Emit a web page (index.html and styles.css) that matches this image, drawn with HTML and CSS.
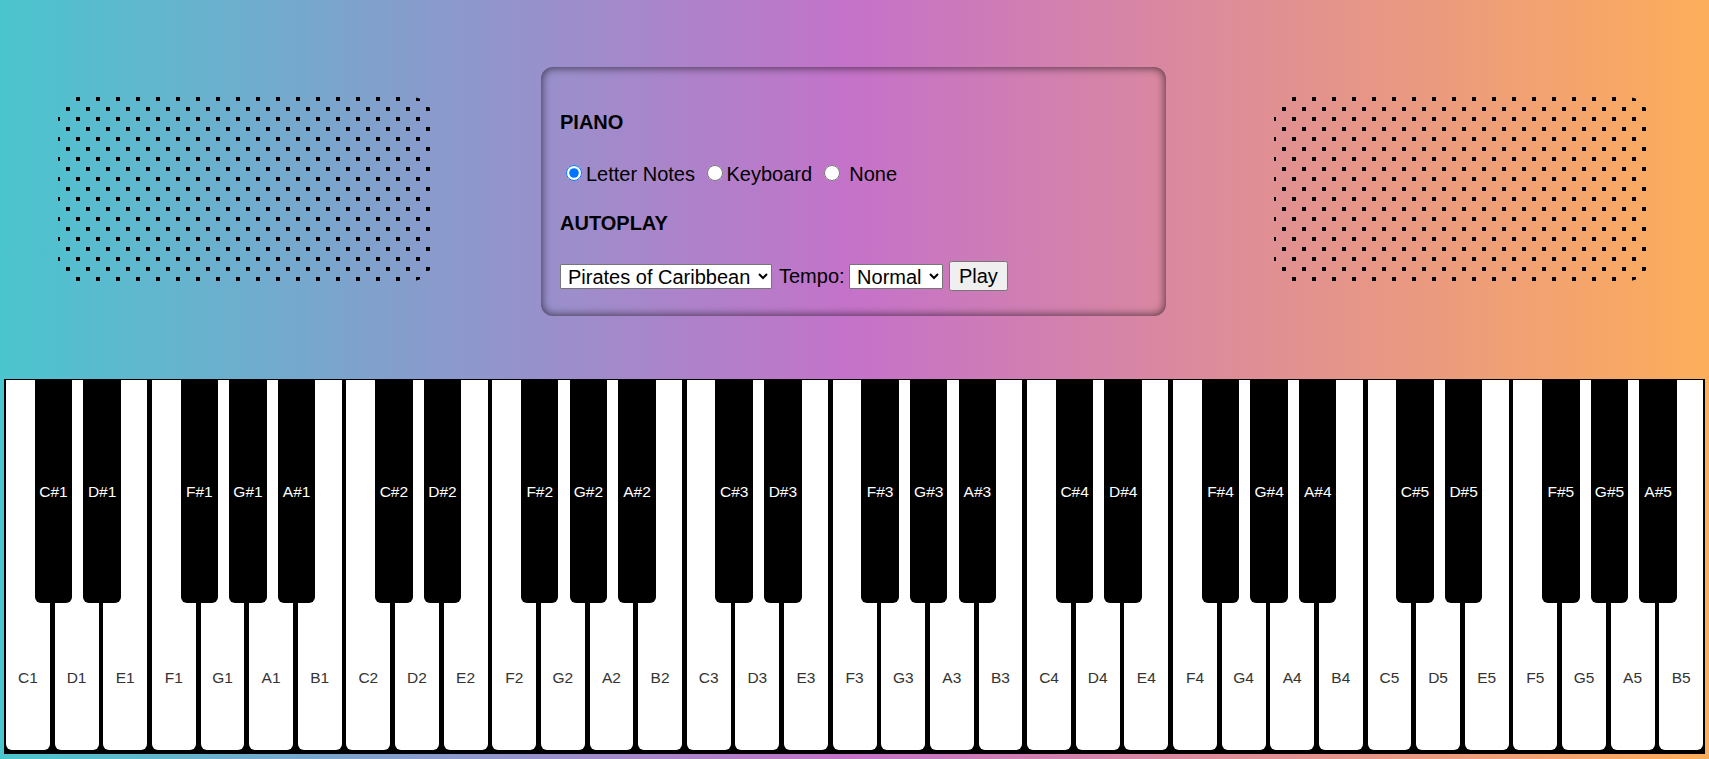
FILE: index.html
```html
<!DOCTYPE html>
<html lang="en">
<head>
<meta charset="utf-8">
<title>Piano</title>
<link rel="stylesheet" href="styles.css">
</head>
<body>
<div class="top">
  <div class="speaker"></div>
  <div class="panel">
    <h4 class="title">PIANO</h4>
    <div class="radios"><label><input type="radio" name="mode" checked>Letter Notes</label> <label><input type="radio" name="mode">Keyboard</label> <label><input type="radio" name="mode"> None</label></div>
    <h4 class="title title-auto">AUTOPLAY</h4>
    <div class="controls">
      <select class="song"><option>Pirates of Caribbean</option></select>
      <span class="tempo-label">Tempo:</span>
      <select class="tempo"><option>Normal</option></select>
      <button class="play">Play</button>
    </div>
  </div>
  <div class="speaker"></div>
</div>
<div class="piano">
  <div class="white"><span>C1</span><div class="black">C#1</div></div>
  <div class="white"><span>D1</span><div class="black">D#1</div></div>
  <div class="white"><span>E1</span></div>
  <div class="white"><span>F1</span><div class="black">F#1</div></div>
  <div class="white"><span>G1</span><div class="black">G#1</div></div>
  <div class="white"><span>A1</span><div class="black">A#1</div></div>
  <div class="white"><span>B1</span></div>
  <div class="white"><span>C2</span><div class="black">C#2</div></div>
  <div class="white"><span>D2</span><div class="black">D#2</div></div>
  <div class="white"><span>E2</span></div>
  <div class="white"><span>F2</span><div class="black">F#2</div></div>
  <div class="white"><span>G2</span><div class="black">G#2</div></div>
  <div class="white"><span>A2</span><div class="black">A#2</div></div>
  <div class="white"><span>B2</span></div>
  <div class="white"><span>C3</span><div class="black">C#3</div></div>
  <div class="white"><span>D3</span><div class="black">D#3</div></div>
  <div class="white"><span>E3</span></div>
  <div class="white"><span>F3</span><div class="black">F#3</div></div>
  <div class="white"><span>G3</span><div class="black">G#3</div></div>
  <div class="white"><span>A3</span><div class="black">A#3</div></div>
  <div class="white"><span>B3</span></div>
  <div class="white"><span>C4</span><div class="black">C#4</div></div>
  <div class="white"><span>D4</span><div class="black">D#4</div></div>
  <div class="white"><span>E4</span></div>
  <div class="white"><span>F4</span><div class="black">F#4</div></div>
  <div class="white"><span>G4</span><div class="black">G#4</div></div>
  <div class="white"><span>A4</span><div class="black">A#4</div></div>
  <div class="white"><span>B4</span></div>
  <div class="white"><span>C5</span><div class="black">C#5</div></div>
  <div class="white"><span>D5</span><div class="black">D#5</div></div>
  <div class="white"><span>E5</span></div>
  <div class="white"><span>F5</span><div class="black">F#5</div></div>
  <div class="white"><span>G5</span><div class="black">G#5</div></div>
  <div class="white"><span>A5</span><div class="black">A#5</div></div>
  <div class="white"><span>B5</span></div>
</div>
</body>
</html>
```
FILE: styles.css
```css
html {
  height: 100%;
  background: linear-gradient(90deg, #4bc5cf 0%, #c572c9 50%, #fdae5a 100%);
}

body {
  margin: 0;
  height: 759px;
  overflow: hidden;
  font-family: "Liberation Sans", Arial, sans-serif;
  color: #000;
}

.top {
  height: 379px;
  display: flex;
  align-items: flex-start;
  padding-left: 58px;
  gap: 108.5px;
  box-sizing: border-box;
}

.speaker {
  flex: 0 0 374px;
  height: 184px;
  margin-top: 97px;
  border-radius: 20px;
  background:
    conic-gradient(from 270deg at 4px 4px, #000 25%, transparent 0) 8px 10px / 20px 20px,
    conic-gradient(from 270deg at 4px 4px, #000 25%, transparent 0) 18px 0 / 20px 20px;
}

.panel {
  flex: 0 0 625px;
  height: 249px;
  margin-top: 67px;
  box-sizing: border-box;
  padding: 44px 19.5px 23.5px;
  border-radius: 12px;
  box-shadow: inset 0 0 9px 1px rgba(0, 0, 0, 0.6);
}

.title {
  margin: 0;
  font-size: 20px;
  font-weight: bold;
  line-height: 23px;
}

.radios {
  margin-top: 28px;
  font-size: 20px;
  line-height: 23px;
  height: 23px;
  padding-top: 1px;
}

.radios input {
  width: 16px;
  height: 16px;
  margin: 0 3.75px 0 6.25px;
  vertical-align: baseline;
}

.title-auto {
  margin-top: 26px;
}

.controls {
  margin-top: 26px;
  height: 30px;
  display: flex;
  align-items: center;
  font-size: 20px;
}

.song,
.tempo {
  height: 25px;
  font-family: "Liberation Sans", Arial, sans-serif;
  font-size: 20px;
  color: #000;
  background: #fff;
  border: 1px solid #767676;
  border-radius: 1px;
  padding: 0 0 0 3px;
  box-sizing: border-box;
}

.song {
  width: 212px;
  margin-right: 7px;
}

.tempo-label {
  margin-right: 4.5px;
}

.tempo {
  width: 94px;
  margin-right: 6px;
}

.play {
  width: 58.5px;
  height: 30px;
  padding: 0;
  font-family: "Liberation Sans", Arial, sans-serif;
  font-size: 20px;
  color: #000;
  background: #efefef;
  border: 1px solid #767676;
  border-radius: 2.5px;
}

.piano {
  margin-left: 4px;
  width: 1701px;
  height: 375px;
  box-sizing: border-box;
  padding: 1px 2px 4px 2px;
  display: flex;
  background: #000;
}

.white {
  flex: 1 1 0;
  min-width: 0;
  height: 370px;
  margin-right: 4.7px;
  position: relative;
  box-sizing: border-box;
  padding-bottom: 63px;
  display: flex;
  flex-direction: column;
  justify-content: flex-end;
  align-items: center;
  background: #fff;
  border-radius: 0 0 6px 6px;
  font-size: 15.5px;
  line-height: 18px;
  color: #333;
}

.white:last-child {
  margin-right: 0;
}

.black {
  position: absolute;
  top: 0;
  right: -22.3px;
  width: 37.5px;
  height: 223px;
  z-index: 1;
  display: flex;
  align-items: center;
  justify-content: center;
  background: #000;
  border-radius: 0 0 6px 6px;
  color: #fff;
  font-size: 15.5px;
}
```
